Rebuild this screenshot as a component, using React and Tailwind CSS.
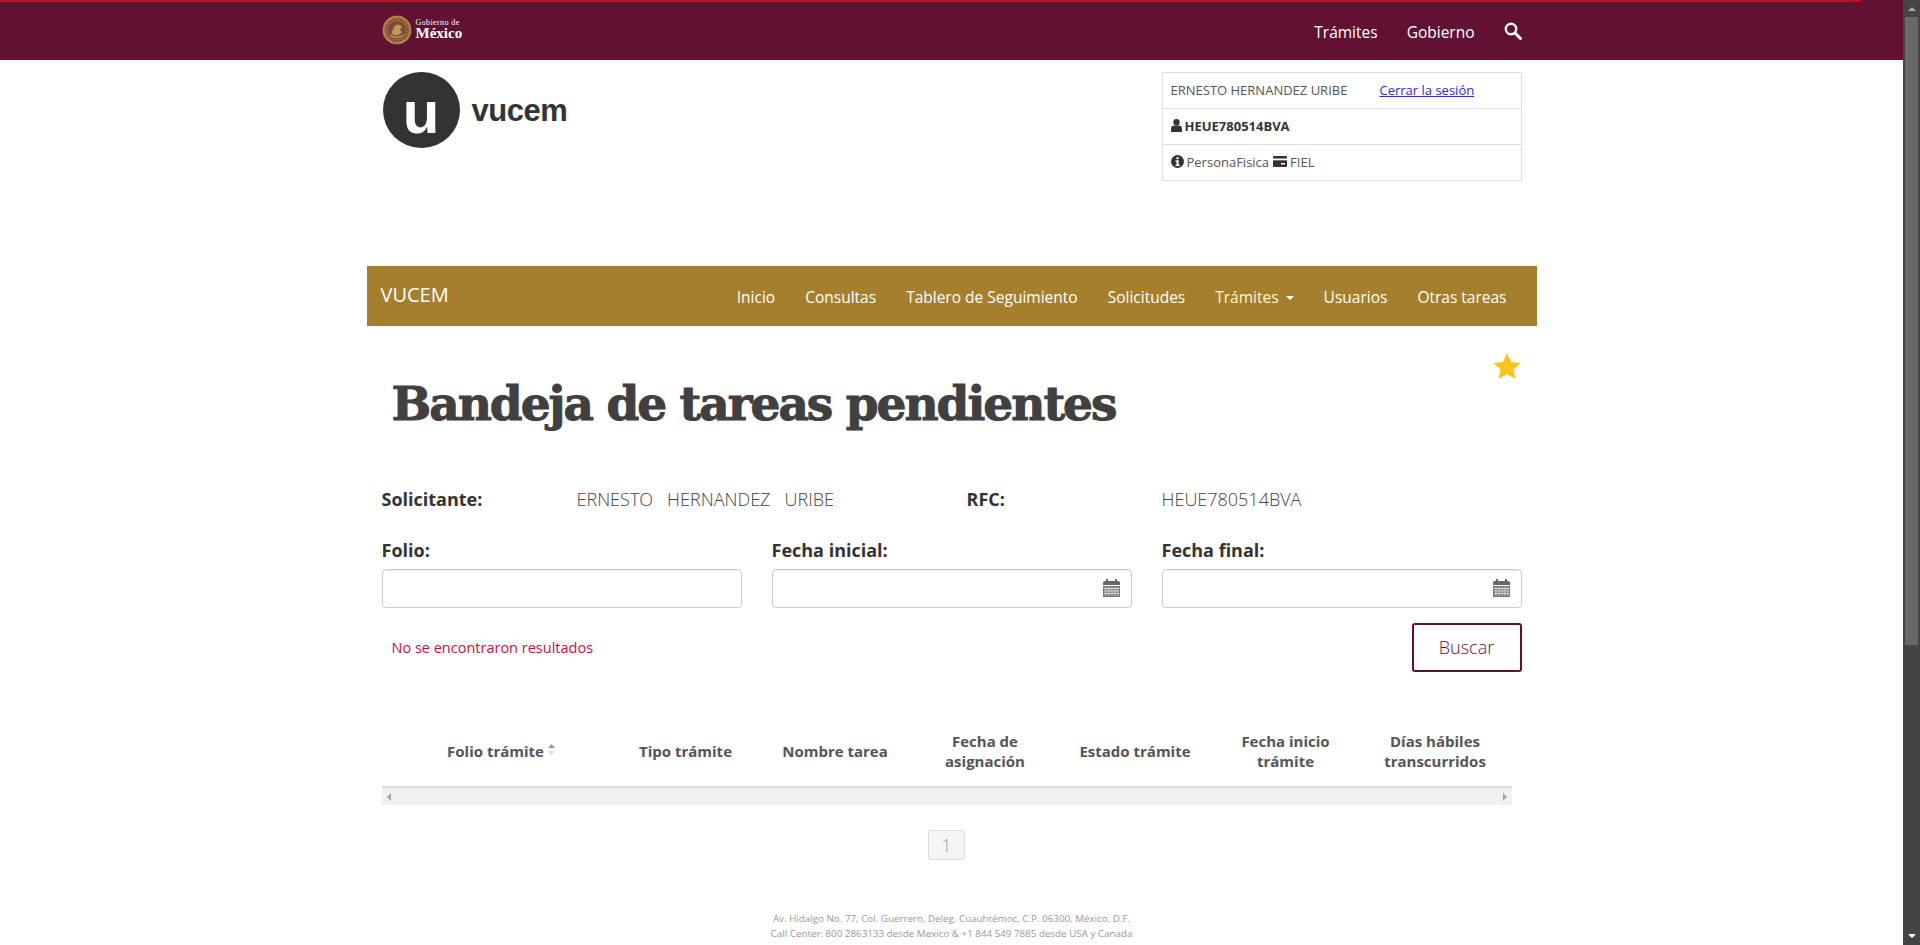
const nav = [
  ['Inicio', false],
  ['Consultas', false],
  ['Tablero de Seguimiento', false],
  ['Solicitudes', false],
  ['Trámites', true],
  ['Usuarios', false],
  ['Otras tareas', false],
];

function Seal() {
  const ring = (n, r, size, fill) =>
    Array.from({ length: n }, (_, i) => {
      const a = (i / n) * Math.PI * 2;
      return <circle key={`${r}-${i}`} cx={15 + r * Math.cos(a)} cy={15 + r * Math.sin(a)} r={size} fill={fill} />;
    });
  return (
    <svg width="30" height="30" viewBox="0 0 30 30" className="shrink-0">
      <circle cx="15" cy="15" r="14.5" fill="#9a6a3c" />
      {ring(34, 13.3, 0.8, '#d0a468')}
      {ring(26, 10.6, 0.7, '#6d3a34')}
      <circle cx="15" cy="15" r="9" fill="#7a4a3a" />
      <path d="M9.500 18c1.500-4 3-8 6-8.500 2.500 0 4 2 5 3.500l-2.500.8 1.800 3.700-3.800 2.700h-4.500z" fill="#c2945a" />
      <path d="M8.500 20c4 3 9 3 13 0" stroke="#c39a5e" strokeWidth="1.200" fill="none" />
    </svg>
  );
}

function Calendar() {
  return (
    <svg width="17" height="18" viewBox="0 0 17 18" className="absolute right-[11px] top-[9px]">
      <path d="M0 4a2 2 0 0 1 2-2h1V0h2v2h7V0h2v2h1a2 2 0 0 1 2 2v2H0z" fill="#666" />
      <rect y="7" width="17" height="11" fill="#777" />
      <path d="M1 9.500h15M1 12h15M1 14.500h15M3 8v9M6 8v9M9 8v9M12 8v9M15 8v9" stroke="#ddd" strokeWidth="0.9" />
    </svg>
  );
}

function DateInput() {
  return (
    <div className="relative h-[39px] rounded-[4px] border border-[#ccc] bg-white shadow-[inset_0_1px_1px_rgba(0,0,0,0.075)]">
      <Calendar />
    </div>
  );
}

function Th({ className, children }) {
  return (
    <div className={`flex items-center justify-center text-center text-[15px] font-bold leading-[20px] text-[#555] ${className}`}>
      {children}
    </div>
  );
}

export default function App() {
  return (
    <div className="flex h-[945px] overflow-hidden bg-white font-['Open_Sans',sans-serif] text-[#333]">
      <div className="relative h-full min-w-0 flex-1 overflow-hidden">
        <header className="h-[60px] bg-[#611232]">
          <div className="h-[2px] w-[1861px] bg-[#d0021b]" />
          <div className="mx-auto flex h-[58px] w-[1170px] items-center px-[15px] pb-[3px]">
            <Seal />
            <div className="ml-[4px] font-['Liberation_Serif',serif] text-white">
              <div className="text-[8px] leading-[8px] tracking-[0.4px]">Gobierno de</div>
              <div className="text-[15px] font-bold leading-[13px]">México</div>
            </div>
            <div className="ml-auto mt-[4px] flex items-center text-[15.500px] leading-[22px] text-white">
              <span>Trámites</span>
              <span className="ml-[29px]">Gobierno</span>
              <svg width="18" height="18" viewBox="0 0 18 18" className="ml-[29px] mb-[1px]">
                <circle cx="7" cy="7" r="5.200" fill="none" stroke="#fff" strokeWidth="2.400" />
                <path d="M11 11l5.500 5.500" stroke="#fff" strokeWidth="3" strokeLinecap="round" />
              </svg>
            </div>
          </div>
        </header>

        <div className="mx-auto w-[1170px]">
          <div className="flex h-[206px] items-start justify-between px-[15px] pt-[12px]">
            <div className="ml-[1px] flex items-start">
              <div className="flex h-[76px] w-[77px] items-center justify-center rounded-full bg-[#333] pt-[6px]">
                <span className="font-['Liberation_Sans',sans-serif] text-[60px] font-bold leading-[60px] text-white">u</span>
              </div>
              <span className="ml-[12px] mt-[19px] font-['Liberation_Sans',sans-serif] text-[31px] font-bold leading-[40px] tracking-[-0.5px] text-[#333]">vucem</span>
            </div>
            <div className="w-[360px] border border-[#ddd] text-[13px] leading-[18px]">
              <div className="flex h-[36px] items-center border-b border-[#ddd] px-[8px] pb-[2px] text-[#555]">
                <span className="w-[178px]">ERNESTO HERNANDEZ URIBE</span>
                <a className="ml-[31px] text-[#2a2ae8] underline">Cerrar la sesión</a>
              </div>
              <div className="flex h-[36px] items-center border-b border-[#ddd] px-[8px] pb-[2px]">
                <svg width="11" height="13" viewBox="0 0 11 13" className="mr-[3px]">
                  <circle cx="5.500" cy="3.300" r="3.200" fill="#333" />
                  <path d="M0 13V9.500C0 7.500 1.500 6.500 3 6.500h5c1.500 0 3 1 3 3V13z" fill="#333" />
                </svg>
                <span className="font-bold">HEUE780514BVA</span>
              </div>
              <div className="flex h-[35px] items-center px-[8px] pb-[2px] text-[#555]">
                <svg width="13" height="13" viewBox="0 0 13 13" className="mr-[3px]">
                  <circle cx="6.500" cy="6.500" r="6.500" fill="#333" />
                  <rect x="5.500" y="2.200" width="2.200" height="2" fill="#fff" />
                  <path d="M4.500 5.300h3.200v4.400h1v1.300H4.500V9.700h1V6.600h-1z" fill="#fff" />
                </svg>
                <span>PersonaFisica</span>
                <svg width="14" height="11" viewBox="0 0 14 11" className="ml-[4px] mr-[3px]">
                  <rect width="14" height="11" rx="1" fill="#333" />
                  <rect y="2.500" width="14" height="1.800" fill="#fff" />
                  <rect x="8" y="7" width="4" height="1.500" fill="#fff" />
                </svg>
                <span>FIEL</span>
              </div>
            </div>
          </div>

          <nav className="flex h-[60px] items-start justify-between bg-[#a57f2c] pl-[14px] pr-[30px] text-white">
            <span className="mt-[16px] text-[20px] leading-[25px]">VUCEM</span>
            <ul className="mt-[20px] flex gap-[30px] text-[15.500px] leading-[22px]">
              {nav.map(([label, caret]) => (
                <li key={label} className={caret ? 'flex items-center text-[#fff9d8]' : ''}>
                  {label}
                  {caret && <span className="ml-[7px] mt-[2px] h-0 w-0 border-x-[4px] border-t-[4px] border-x-transparent border-t-white" />}
                </li>
              ))}
            </ul>
          </nav>

          <div className="px-[15px]">
            <div className="relative h-[131px]">
              <svg width="28" height="26" viewBox="0 0 24 23" className="absolute right-[1px] top-[27px]">
                <path d="M12 0l3.600 7.900 8.400.9-6.300 5.800 1.800 8.400L12 18.700 4.500 23l1.800-8.400L0 8.800l8.400-.9z" fill="#fcc41f" />
              </svg>
              <h1 className="absolute left-[10px] top-[48px] whitespace-nowrap font-['DejaVu_Serif',serif] text-[47px] font-bold leading-[60px] tracking-[-2px] text-[#404040] [-webkit-text-stroke:1px_#404040]">
                Bandeja de tareas pendientes
              </h1>
            </div>

            <div className="mt-[30px] flex h-[24px] items-center text-[18px] leading-[24px]">
              <b className="w-[195px] text-[#333]">Solicitante:</b>
              <span className="w-[390px] whitespace-pre font-light text-[#444]">ERNESTO   HERNANDEZ   URIBE</span>
              <b className="w-[195px] text-[#333]">RFC:</b>
              <span className="font-light text-[#444]">HEUE780514BVA</span>
            </div>

            <div className="mt-[28px] grid grid-cols-3 gap-x-[30px]">
              <div>
                <label className="block h-[30px] text-[18px] font-bold leading-[22px]">Folio:</label>
                <div className="h-[39px] rounded-[4px] border border-[#ccc] bg-white shadow-[inset_0_1px_1px_rgba(0,0,0,0.075)]" />
              </div>
              <div>
                <label className="block h-[30px] text-[18px] font-bold leading-[22px]">Fecha inicial:</label>
                <DateInput />
              </div>
              <div>
                <label className="block h-[30px] text-[18px] font-bold leading-[22px]">Fecha final:</label>
                <DateInput />
              </div>
            </div>

            <div className="mt-[15px] flex items-center justify-between">
              <span className="pl-[10px] text-[14.500px] leading-[20px] text-[#c8103e]">No se encontraron resultados</span>
              <button className="h-[49px] w-[110px] rounded-[3px] border-2 border-[#611232] bg-white text-[18px] font-light text-[#611232]">Buscar</button>
            </div>

            <div className="mt-[32px] w-[1130px]">
              <div className="flex h-[84px] items-center border-b-2 border-[#ddd] pt-[12px]">
                <Th className="w-[230px] pl-[10px]">
                  Folio trámite
                  <svg width="9" height="11" viewBox="0 0 9 11" className="ml-[3px] mb-[3px]">
                    <path d="M4.500 0L8 4H1z" fill="#999" />
                    <path d="M4.500 11L8 7H1z" fill="#ddd" />
                  </svg>
                </Th>
                <Th className="w-[148px]">Tipo trámite</Th>
                <Th className="w-[151px]">Nombre tarea</Th>
                <Th className="w-[149px]">Fecha de<br />asignación</Th>
                <Th className="w-[151px]">Estado trámite</Th>
                <Th className="w-[150px]">Fecha inicio<br />trámite</Th>
                <Th className="w-[149px]">Días hábiles<br />transcurridos</Th>
              </div>
              <div className="flex h-[17px] items-center justify-between bg-[#f1f1f1] px-[5px]">
                <span className="h-0 w-0 border-y-[4px] border-r-[4px] border-y-transparent border-r-[#a3a3a3]" />
                <span className="h-0 w-0 border-y-[4px] border-l-[4px] border-y-transparent border-l-[#a3a3a3]" />
              </div>
            </div>

            <div className="mt-[25px] flex justify-center pr-[10px]">
              <span className="flex h-[30px] w-[37px] items-center justify-center rounded-[3px] border border-[#ddd] bg-[#f5f5f5] text-[18px] font-light text-[#999]">1</span>
            </div>

            <div className="mt-[51px] text-center text-[9.800px] leading-[15px] text-[#999]">
              <p>Av. Hidalgo No. 77, Col. Guerrero, Deleg. Cuauhtémoc, C.P. 06300, México, D.F.</p>
              <p>Call Center: 800 2863133 desde Mexico &amp; +1 844 549 7885 desde USA y Canada</p>
              <p>Para información de contacto, consulte nuestros Términos y Condiciones de Uso y Aviso de Privacidad en este sitio web</p>
            </div>
          </div>
        </div>
      </div>

      <div className="flex h-full w-[17px] shrink-0 flex-col items-center bg-[#444]">
        <span className="mt-[7px] h-0 w-0 border-x-[4px] border-b-[4px] border-x-transparent border-b-[#aaa]" />
        <div className="mt-[6px] h-[628px] w-[13px] bg-[#686868]" />
        <span className="mb-[7px] mt-auto h-0 w-0 border-x-[4px] border-t-[4px] border-x-transparent border-t-white" />
      </div>
    </div>
  );
}
